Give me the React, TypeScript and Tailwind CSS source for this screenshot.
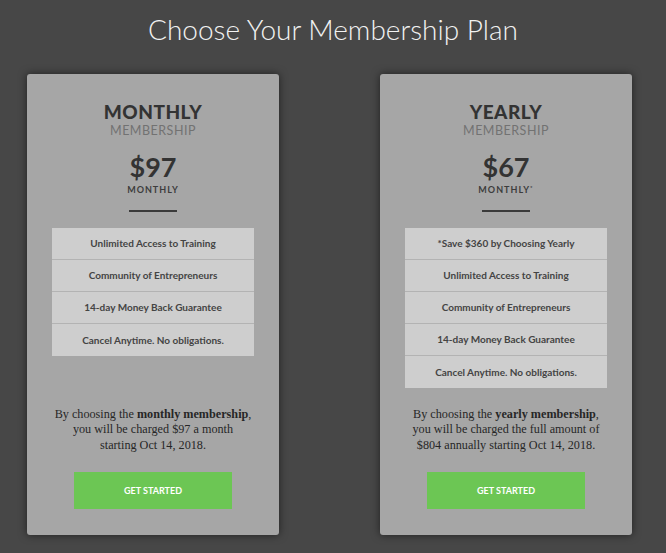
import React from 'react';

type Plan = {
  name: string;
  price: string;
  per: string;
  star?: boolean;
  features: string[];
  note: React.ReactNode;
};

const plans: Plan[] = [
  {
    name: 'MONTHLY',
    price: '$97',
    per: 'MONTHLY',
    features: [
      'Unlimited Access to Training',
      'Community of Entrepreneurs',
      '14-day Money Back Guarantee',
      'Cancel Anytime. No obligations.',
    ],
    note: (
      <>
        By choosing the <strong>monthly membership</strong>,<br />
        you will be charged $97 a month
        <br />
        starting Oct 14, 2018.
      </>
    ),
  },
  {
    name: 'YEARLY',
    price: '$67',
    per: 'MONTHLY',
    star: true,
    features: [
      '*Save $360 by Choosing Yearly',
      'Unlimited Access to Training',
      'Community of Entrepreneurs',
      '14-day Money Back Guarantee',
      'Cancel Anytime. No obligations.',
    ],
    note: (
      <>
        By choosing the <strong>yearly membership</strong>,<br />
        you will be charged the full amount of
        <br />
        $804 annually starting Oct 14, 2018.
      </>
    ),
  },
];

const PlanCard = ({ plan }: { plan: Plan }) => (
  <div className="w-[252px] h-[461px] bg-[#a6a6a6] rounded-[3px] shadow-[0_0_8px_rgba(0,0,0,0.55)] flex flex-col items-center pt-[27px] pb-[26px] font-['Lato',sans-serif]">
    <h2 className="text-[19px] leading-[22px] font-black text-[#333] tracking-[0.5px]">
      {plan.name}
    </h2>
    <p className="text-[12.5px] leading-[16px] font-normal text-[#727272] tracking-[0.5px]">
      MEMBERSHIP
    </p>
    <p className="mt-[13px] text-[27px] leading-[30px] font-bold text-[#333]">
      {plan.price}
    </p>
    <p className="mt-[2px] text-[9px] leading-[12px] font-bold text-[#3d3d3d] tracking-[1px]">
      {plan.per}
      {plan.star && <sup className="text-[6px]">*</sup>}
    </p>
    <div className="mt-[14px] w-[48px] h-[2px] bg-[#3a3a3a]" />
    <ul className="mt-[16px] w-[202px] bg-[#cecece]">
      {plan.features.map((f, i) => (
        <li
          key={i}
          className={`h-[32px] flex items-center justify-center text-[10px] font-bold text-[#444] ${
            i < plan.features.length - 1 ? 'border-b border-[#b3b3b3]' : ''
          }`}
        >
          {f}
        </li>
      ))}
    </ul>
    <p className="mt-auto text-center text-[12.2px] leading-[15.5px] text-[#262626] font-['Liberation_Serif',serif]">
      {plan.note}
    </p>
    <button className="mt-[19px] w-[158px] h-[37px] bg-[#6cc654] text-white text-[9px] font-bold">
      GET STARTED
    </button>
  </div>
);

export default function App() {
  return (
    <div className="w-[666px] h-[553px] bg-[#474747] overflow-hidden">
      <h1 className="pt-[12px] text-center text-[28px] leading-[34px] font-light text-[#f2f2f2] font-['Lato',sans-serif]">
        Choose Your Membership Plan
      </h1>
      <div className="mt-[28px] pl-[27px] flex gap-[101px]">
        {plans.map((p) => (
          <PlanCard key={p.name} plan={p} />
        ))}
      </div>
    </div>
  );
}
